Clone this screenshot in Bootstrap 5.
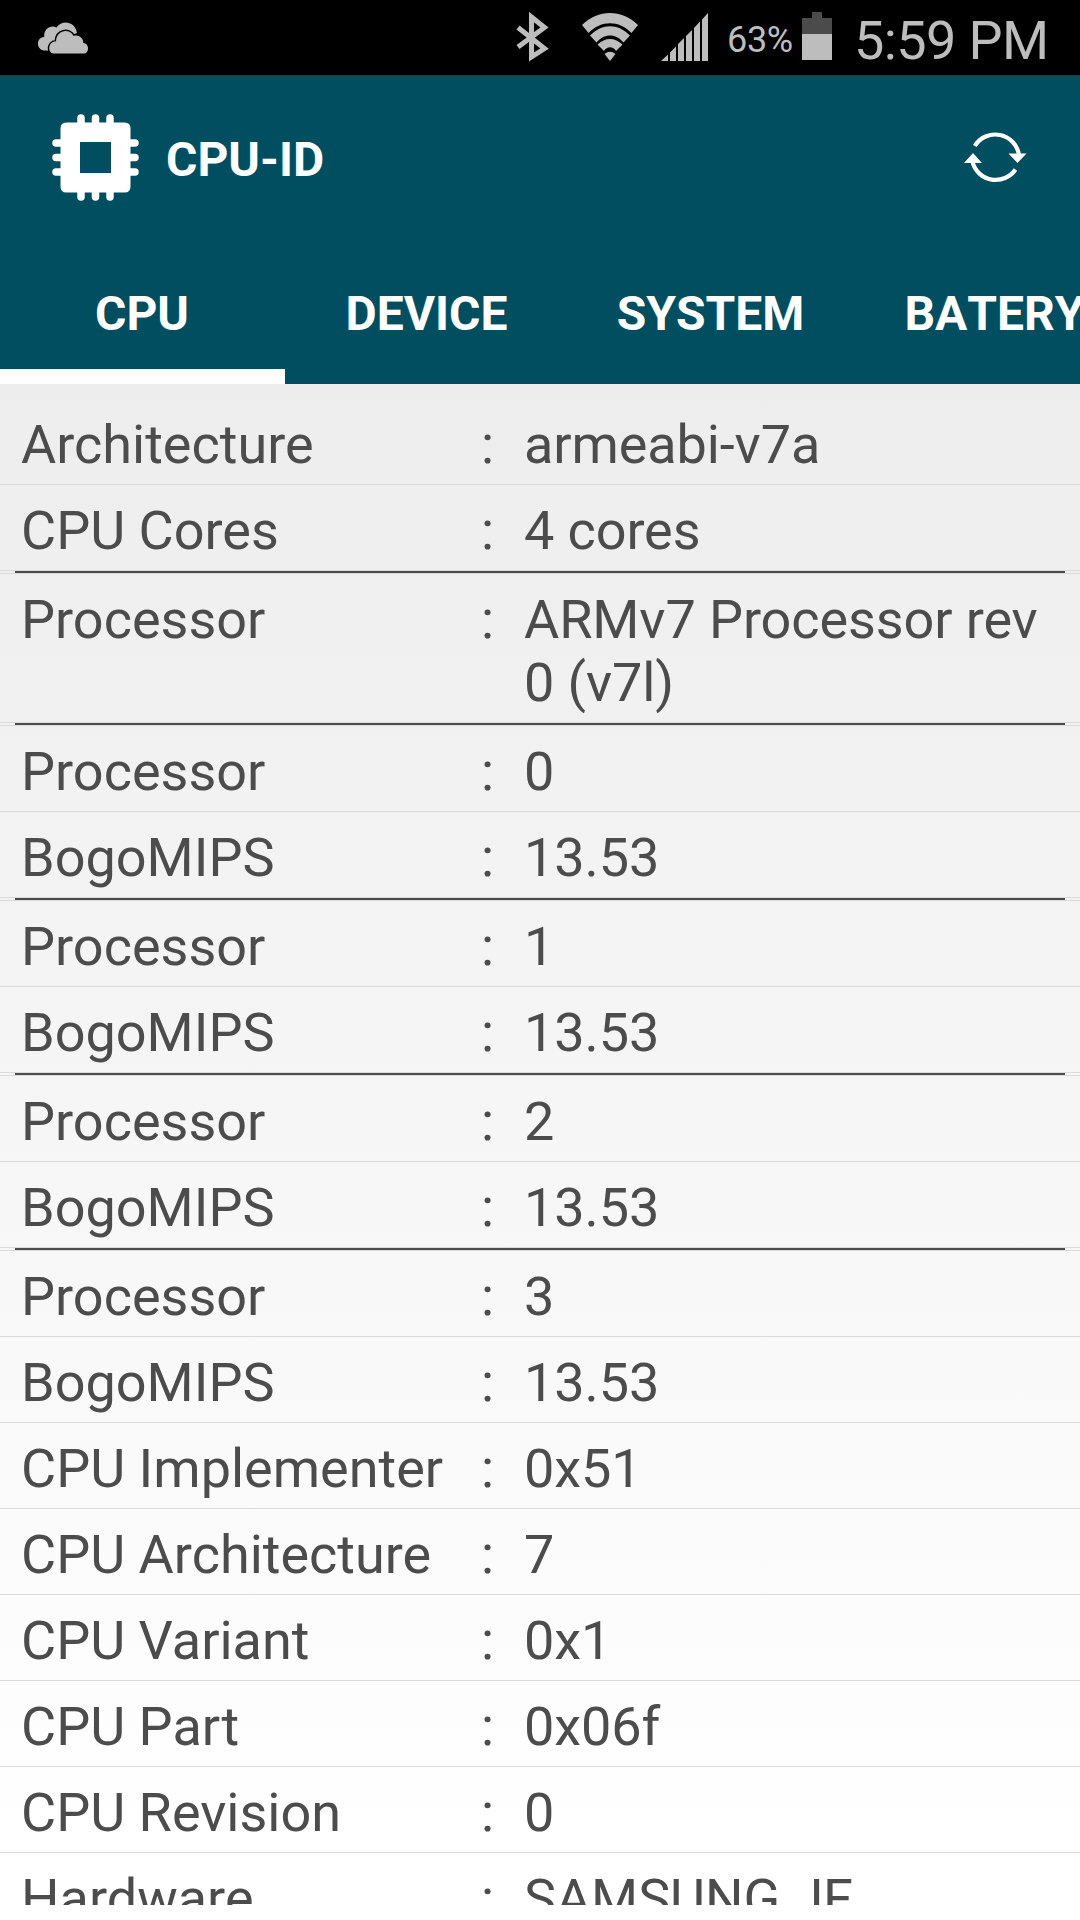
<!DOCTYPE html>
<html lang="en">
<head>
<meta charset="utf-8">
<meta name="viewport" content="width=device-width, initial-scale=1">
<title>CPU-ID</title>
<link href="https://cdn.jsdelivr.net/npm/bootstrap@5.3.0/dist/css/bootstrap.min.css" rel="stylesheet">
<style>
  body { font-family: Roboto, "Liberation Sans", sans-serif; background: #fff; }
  .phone { width: 1080px; height: 1920px; }
  .statusbar { height: 75px; background: #000; color: #bdbdbd; padding: 0 36px 0 38px; line-height: 75px; }
  .statusbar > svg { margin-top: 12px; }
  .s-cloud { padding-top: 10px; }
  .s-wifi { margin-left: 33px; }
  .s-signal { margin-left: 23px; }
  .s-percent { font-size: 36px; width: 94px; padding-left: 19px; padding-top: 3px; white-space: nowrap; letter-spacing: -.3px; }
  .s-clock { font-size: 54px; font-weight: 400; width: 212px; padding-left: 22px; padding-top: 3px; white-space: nowrap; letter-spacing: -.6px; }
  .apphead { background: #004e60; color: #fff; height: 309px; font-size: 48px; font-weight: 700; }
  .titlebar { height: 165px; padding: 0 53px 0 52px; }
  .titlebar .app-name { font-size: 48px; font-weight: 700; margin-left: 27px; line-height: 56px; padding-top: 4px; }
  .titlebar .refresh { margin-top: -2px; }
  .tabstrip { height: 144px; font-kerning: none; }
  .tabstrip .nav-link { flex: 0 0 284px; height: 144px; padding: 3px 0 0; color: #fff; border-bottom: 15px solid transparent; border-radius: 0; text-align: center; white-space: nowrap; }
  .tabstrip .nav-link.active { flex-basis: 285px; border-bottom-color: #fff; }
  .tabstrip .nav-link span { display: block; line-height: 142px; margin-left: -1px; }
  .screen { background: linear-gradient(#ededed, #fff 97%); padding: 15px 0; color: #4c4c4d; font-size: 54px; line-height: 63px; min-height: 0; }
  .specs { height: 1506px; }
  .spec { padding: 14px 21px 8px; border-bottom: 1px solid #dadada; }
  .spec dt { width: 460px; flex: none; font-weight: 400; }
  .spec dd { margin: 0; flex: 1 1 0; min-width: 0; letter-spacing: -.1px; }
  .spec .sep { width: 43px; flex: none; }
  .rule { padding: 0 15px; border-bottom: 1px solid #dadada; }
  .rule hr { margin: 0; border: 0; height: 2px; background: #4c4c4d; opacity: 1; }
</style>
<script src="https://cdn.jsdelivr.net/npm/bootstrap@5.3.0/dist/js/bootstrap.bundle.min.js"></script>
</head>
<body>
<div class="phone d-flex flex-column overflow-hidden">
  <div class="statusbar d-flex align-items-start flex-shrink-0">
    <div class="s-cloud me-auto d-flex">
      <svg width="50" height="46" viewBox="0 0 50 46">
        <path fill="#bdbdbd" d="M7 40.500C-2 40.500-2.500 27.500 6.200 27C5.500 19 12.500 14.500 18.500 17.500C24 9.500 37 11 39 23Q33 25 27 28L12 40.500Z"/>
        <path fill="#bdbdbd" stroke="#000" stroke-width="3" paint-order="stroke" d="M16.500 43.500C9 43.500 9.500 31.800 18 31.300C18.300 20.500 31 17.500 35.700 26C40 24.200 45.500 27.500 45.300 33C51.500 33 51.500 43.500 46 43.500Z"/>
      </svg>
    </div>
    <svg width="33" height="50" viewBox="0 0 33 50"><path d="M2 15.500 28.500 36.500 15.500 45V5L28.500 15.500 2 35" fill="none" stroke="#bdbdbd" stroke-width="5"/></svg>
    <svg class="s-wifi" width="56" height="50" viewBox="0 0 56 50">
      <path fill="#bdbdbd" d="M0 13C16-3 40-3 56 13L49.500 21C37 8 19 8 6.500 21ZM8 23.500C20 11 36 11 48 23.500L41.500 30.500C34 21 22 21 14.500 30.500ZM15.500 32.500C23 25 33 25 40.500 32.500L34 39C31 34 25 34 22 39ZM22.500 42Q28 37.500 33.500 42L28 49Z"/>
    </svg>
    <svg class="s-signal" width="47" height="50" viewBox="0 0 47 50"><path fill="#bdbdbd" d="M0 49 7 42.500V49ZM9 40.500 15 34.500V49H9ZM17 32 23 26V49H17ZM25 24 31 18V49H25ZM33 16 39 9.500V49H33ZM41 7.500 47 1V49H41Z"/></svg>
    <div class="s-percent">63%</div>
    <svg width="30" height="50" viewBox="0 0 30 50"><path fill="#4b4b4b" d="M10 0H20V6H30V22H0V6H10Z"/><path fill="#bdbdbd" d="M0 22H30V48H0Z"/></svg>
    <div class="s-clock">5:59 PM</div>
  </div>

  <header class="apphead flex-shrink-0">
    <div class="titlebar d-flex align-items-center">
      <svg width="87" height="87" viewBox="0 0 87 87">
        <path fill="#fff" fill-rule="evenodd" d="M14.500 8.500H72.500Q78.500 8.500 78.500 14.500V72.500Q78.500 78.500 72.500 78.500H14.500Q8.500 78.500 8.500 72.500V14.500Q8.500 8.500 14.500 8.500ZM28 28V59H59V28Z"/>
        <path stroke="#fff" stroke-width="7.500" stroke-linecap="round" d="M29 4V10M43.500 4V10M58 4V10M29 77V83M43.500 77V83M58 77V83M4 29H10M4 43.500H10M4 58H10M77 29H83M77 43.500H83M77 58H83"/>
      </svg>
      <div class="app-name me-auto">CPU-ID</div>
      <svg class="refresh" width="63" height="52" viewBox="0 0 63 52">
        <path fill="none" stroke="#fff" stroke-width="4.200" d="M10.800 15A24 24 0 0 1 55 24M51.500 38.500A24 24 0 0 1 8.500 31"/>
        <path fill="#fff" d="M44.500 22.500H62.500L53.500 32ZM0 32H18L9 22Z"/>
      </svg>
    </div>
    <nav class="tabstrip nav flex-nowrap overflow-hidden">
      <a class="nav-link active"><span>CPU</span></a>
      <a class="nav-link"><span>DEVICE</span></a>
      <a class="nav-link"><span>SYSTEM</span></a>
      <a class="nav-link"><span>BATERY</span></a>
    </nav>
  </header>

  <main class="screen flex-grow-1">
    <dl class="specs overflow-hidden mb-0">
      <div class="spec d-flex"><dt>Architecture</dt><dd class="sep">:</dd><dd>armeabi-v7a</dd></div>
      <div class="spec d-flex"><dt>CPU Cores</dt><dd class="sep">:</dd><dd>4 cores</dd></div>
      <div class="rule"><hr></div>
      <div class="spec d-flex"><dt>Processor</dt><dd class="sep">:</dd><dd>ARMv7 Processor rev 0 (v7l)</dd></div>
      <div class="rule"><hr></div>
      <div class="spec d-flex"><dt>Processor</dt><dd class="sep">:</dd><dd>0</dd></div>
      <div class="spec d-flex"><dt>BogoMIPS</dt><dd class="sep">:</dd><dd>13.53</dd></div>
      <div class="rule"><hr></div>
      <div class="spec d-flex"><dt>Processor</dt><dd class="sep">:</dd><dd>1</dd></div>
      <div class="spec d-flex"><dt>BogoMIPS</dt><dd class="sep">:</dd><dd>13.53</dd></div>
      <div class="rule"><hr></div>
      <div class="spec d-flex"><dt>Processor</dt><dd class="sep">:</dd><dd>2</dd></div>
      <div class="spec d-flex"><dt>BogoMIPS</dt><dd class="sep">:</dd><dd>13.53</dd></div>
      <div class="rule"><hr></div>
      <div class="spec d-flex"><dt>Processor</dt><dd class="sep">:</dd><dd>3</dd></div>
      <div class="spec d-flex"><dt>BogoMIPS</dt><dd class="sep">:</dd><dd>13.53</dd></div>
      <div class="spec d-flex"><dt>CPU Implementer</dt><dd class="sep">:</dd><dd>0x51</dd></div>
      <div class="spec d-flex"><dt>CPU Architecture</dt><dd class="sep">:</dd><dd>7</dd></div>
      <div class="spec d-flex"><dt>CPU Variant</dt><dd class="sep">:</dd><dd>0x1</dd></div>
      <div class="spec d-flex"><dt>CPU Part</dt><dd class="sep">:</dd><dd>0x06f</dd></div>
      <div class="spec d-flex"><dt>CPU Revision</dt><dd class="sep">:</dd><dd>0</dd></div>
      <div class="spec d-flex"><dt>Hardware</dt><dd class="sep">:</dd><dd>SAMSUNG JF</dd></div>
    </dl>
  </main>
</div>
</body>
</html>
